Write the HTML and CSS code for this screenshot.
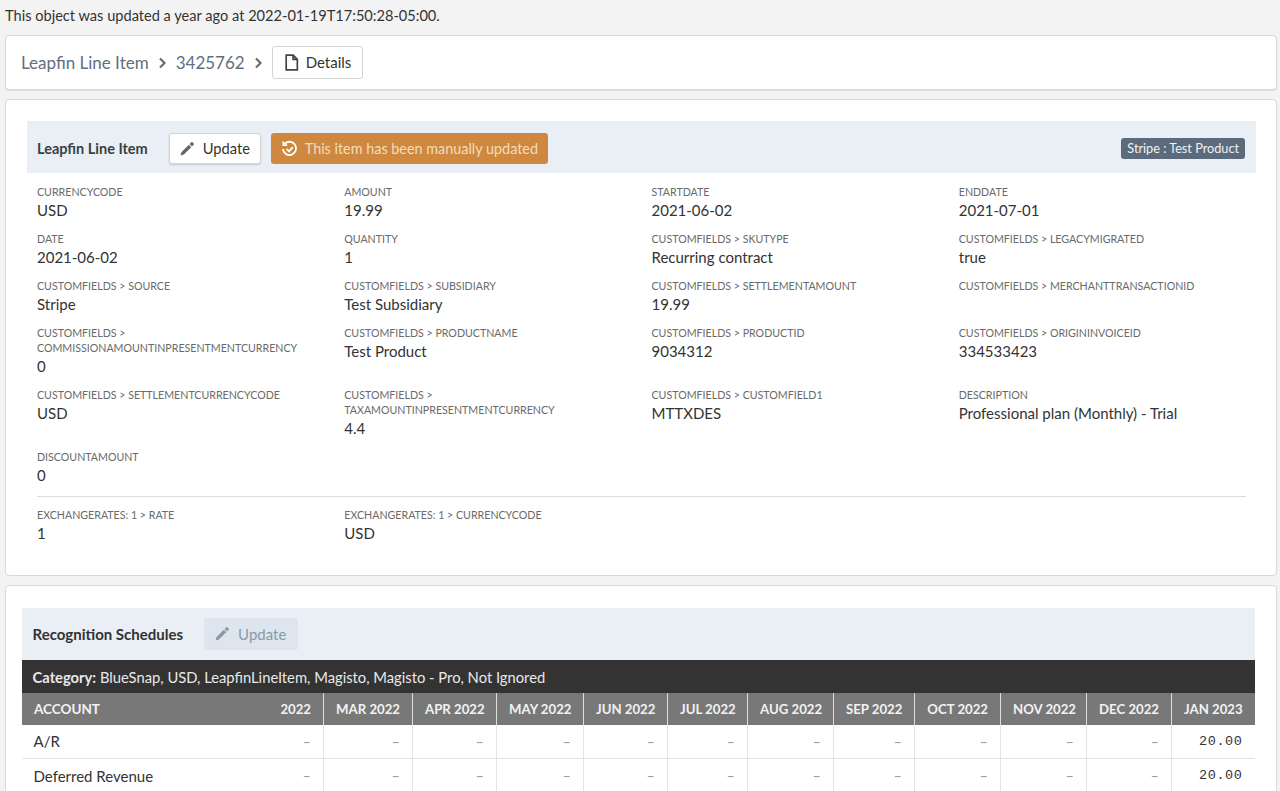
FILE: index.html
```html
<!DOCTYPE html>
<html lang="en">
<head>
<meta charset="utf-8">
<title>Leapfin Line Item</title>
<link rel="stylesheet" href="styles.css">
</head>
<body>
<p class="notice">This object was updated a year ago at 2022-01-19T17:50:28-05:00.</p>
<nav class="panel crumbs">
  <span class="crumb">Leapfin Line Item</span>
  <svg class="chev" viewBox="0 0 10 12"><path d="M3 1.500 7.500 6 3 10.500" /></svg>
  <span class="crumb">3425762</span>
  <svg class="chev" viewBox="0 0 10 12"><path d="M3 1.500 7.500 6 3 10.500" /></svg>
  <button class="btn details">
    <svg class="doc" viewBox="0 0 14 16"><path d="M2 1h6.500L12.500 5v10H2zM8.500 1v4h4"/></svg>Details
  </button>
</nav>
<section class="panel item">
  <header class="head">
    <h2>Leapfin Line Item</h2>
    <button class="btn update">
      <svg class="pencil" viewBox="0 0 16 16"><path d="M0.500 15.500l1-3.600 7.900-7.900 2.600 2.600-7.900 7.900zM10.200 3.200l1.800-1.800a1 1 0 0 1 1.400 0l1.200 1.200a1 1 0 0 1 0 1.400l-1.800 1.800z"/></svg>Update
    </button>
    <span class="flag">
      <svg class="hist" viewBox="0 0 18 18"><path d="M3.500 4.500A7 7 0 1 1 2 9.500"/><path d="M2.500 1.500v4h4"/><path d="M6 9.500l2.500 2.500 4-4.500"/></svg>This item has been manually updated
    </span>
    <span class="tag">Stripe : Test Product</span>
  </header>
  <div class="fields">
    <div class="f"><label>CURRENCYCODE</label><b>USD</b></div>
    <div class="f"><label>AMOUNT</label><b>19.99</b></div>
    <div class="f"><label>STARTDATE</label><b>2021-06-02</b></div>
    <div class="f"><label>ENDDATE</label><b>2021-07-01</b></div>
    <div class="f"><label>DATE</label><b>2021-06-02</b></div>
    <div class="f"><label>QUANTITY</label><b>1</b></div>
    <div class="f"><label>CUSTOMFIELDS &gt; SKUTYPE</label><b>Recurring contract</b></div>
    <div class="f"><label>CUSTOMFIELDS &gt; LEGACYMIGRATED</label><b>true</b></div>
    <div class="f"><label>CUSTOMFIELDS &gt; SOURCE</label><b>Stripe</b></div>
    <div class="f"><label>CUSTOMFIELDS &gt; SUBSIDIARY</label><b>Test Subsidiary</b></div>
    <div class="f"><label>CUSTOMFIELDS &gt; SETTLEMENTAMOUNT</label><b>19.99</b></div>
    <div class="f"><label>CUSTOMFIELDS &gt; MERCHANTTRANSACTIONID</label></div>
    <div class="f"><label>CUSTOMFIELDS &gt; COMMISSIONAMOUNTINPRESENTMENTCURRENCY</label><b>0</b></div>
    <div class="f"><label>CUSTOMFIELDS &gt; PRODUCTNAME</label><b>Test Product</b></div>
    <div class="f"><label>CUSTOMFIELDS &gt; PRODUCTID</label><b>9034312</b></div>
    <div class="f"><label>CUSTOMFIELDS &gt; ORIGININVOICEID</label><b>334533423</b></div>
    <div class="f"><label>CUSTOMFIELDS &gt; SETTLEMENTCURRENCYCODE</label><b>USD</b></div>
    <div class="f"><label>CUSTOMFIELDS &gt; TAXAMOUNTINPRESENTMENTCURRENCY</label><b>4.4</b></div>
    <div class="f"><label>CUSTOMFIELDS &gt; CUSTOMFIELD1</label><b>MTTXDES</b></div>
    <div class="f"><label>DESCRIPTION</label><b>Professional plan (Monthly) - Trial</b></div>
    <div class="f"><label>DISCOUNTAMOUNT</label><b>0</b></div>
  </div>
  <hr class="rule">
  <div class="fields">
    <div class="f"><label>EXCHANGERATES: 1 &gt; RATE</label><b>1</b></div>
    <div class="f"><label>EXCHANGERATES: 1 &gt; CURRENCYCODE</label><b>USD</b></div>
  </div>
</section>
<section class="panel sched">
  <header class="head shead">
    <h2>Recognition Schedules</h2>
    <button class="btn off">
      <svg class="pencil" viewBox="0 0 16 16"><path d="M0.500 15.500l1-3.600 7.900-7.900 2.600 2.600-7.900 7.900zM10.200 3.200l1.800-1.800a1 1 0 0 1 1.400 0l1.200 1.200a1 1 0 0 1 0 1.400l-1.800 1.800z"/></svg>Update
    </button>
  </header>
  <div class="cat"><strong>Category:</strong> BlueSnap, USD, LeapfinLineItem, Magisto, Magisto - Pro, Not Ignored</div>
  <table>
    <colgroup><col><col><col><col><col><col><col><col><col><col><col><col><col></colgroup>
    <thead>
      <tr><th>ACCOUNT</th><th>2022</th><th>MAR 2022</th><th>APR 2022</th><th>MAY 2022</th><th>JUN 2022</th><th>JUL 2022</th><th>AUG 2022</th><th>SEP 2022</th><th>OCT 2022</th><th>NOV 2022</th><th>DEC 2022</th><th>JAN 2023</th></tr>
    </thead>
    <tbody>
      <tr><td>A/R</td><td>–</td><td>–</td><td>–</td><td>–</td><td>–</td><td>–</td><td>–</td><td>–</td><td>–</td><td>–</td><td>–</td><td class="n">20.00</td></tr>
      <tr><td>Deferred Revenue</td><td>–</td><td>–</td><td>–</td><td>–</td><td>–</td><td>–</td><td>–</td><td>–</td><td>–</td><td>–</td><td>–</td><td class="n">20.00</td></tr>
    </tbody>
  </table>
</section>
</body>
</html>
```
FILE: styles.css
```css
*{box-sizing:border-box}
html,body{height:791px;overflow:hidden}
body{margin:0;padding:0 3px 0 5px;background:#f3f3f3;font-family:Lato,sans-serif;color:#2f3a45;font-size:15px}
.notice{margin:0;height:35px;padding:7px 0 0;font-size:14.6px;line-height:18px;color:#333}
.panel{background:#fff;border:1px solid #d8d8d8;border-radius:4px}
.crumbs{height:55px;display:flex;align-items:center;padding:0 15px;box-shadow:0 1px 1px rgba(0,0,0,.1)}
.crumb{font-size:17px;color:#5f6f7e}
.chev{width:10px;height:12px;margin:0 8.500px;fill:none;stroke:#5f6f7e;stroke-width:2.200}
.btn{display:inline-flex;align-items:center;font-family:inherit;background:#fff;border:1px solid #d4d4d4;border-radius:3px;color:#333;font-size:15px;padding:0}
.details{height:33px;width:91px;padding:0 0 1px 11px;font-size:15px}
.doc{width:15px;height:17px;margin-right:7px;fill:none;stroke:#444;stroke-width:1.600}
.item{margin-top:9px;height:477px;padding:21px 20px 0 20.500px}
.head{display:flex;align-items:center;height:52px;background:#e9eff4;padding:2px 11px 0 10.500px}
.head h2{margin:0;font-size:14.500px;font-weight:700;color:#3a3f45}
.update{height:31px;width:92px;margin-left:21px;padding-left:10px;font-size:14.700px;box-shadow:0 1px 2px rgba(0,0,0,.15)}
.pencil{width:15px;height:15px;margin-right:8px;fill:#666}
.flag{display:inline-flex;align-items:center;height:31px;width:277px;margin-left:10px;padding-left:10px;background:#cf883f;color:#f3dcbc;border-radius:3px;font-size:14.400px}
.hist{width:17px;height:17px;margin-right:7px;fill:none;stroke:#fff;stroke-width:1.900}
.tag{margin-left:auto;height:21px;padding:0 6px;line-height:21px;background:#5b6b7c;color:#f0f2f4;font-size:12.700px;border-radius:3px}
.fields{display:grid;grid-template-columns:repeat(4,307.250px);padding:0 10.500px;margin-top:11px;row-gap:9px}
.rule+.fields{margin-top:10px}
.f{padding-right:30px;min-height:38px}
.f label{display:block;font-size:10.650px;line-height:15px;color:#6a6a6a}
.f b{display:block;font-weight:400;font-size:15px;line-height:23px;color:#333}
.rule{border:0;border-top:1px solid #ddd;margin:9px 10.500px 0;height:0}
.sched{margin-top:9px;height:260px;padding:21.500px 21px 0 16px}
.shead{height:52.500px;padding:0 10.500px}
.shead h2{font-size:15px;color:#333}
.off{height:32px;width:94px;margin-left:21px;padding-left:11px;background:#dde6ee;border:0;color:#8a99a6}
.off .pencil{fill:#8a99a6}
.cat{background:#333;color:#e8e8e8;height:32.500px;line-height:34px;padding:0 10.500px;font-size:14.750px}
.cat strong{font-weight:700}
table{border-collapse:collapse;width:1232.500px;table-layout:fixed}
col:nth-child(1){width:220px}
col:nth-child(2){width:81.500px}
col:nth-child(3){width:89px}
col:nth-child(4){width:84px}
col:nth-child(5){width:87px}
col:nth-child(6){width:84px}
col:nth-child(7){width:80px}
col:nth-child(8){width:86px}
col:nth-child(9){width:81px}
col:nth-child(10){width:86px}
col:nth-child(11){width:86px}
col:nth-child(12){width:85px}
col:nth-child(13){width:83px}
th{background:#787878;color:#f2f2f2;font-weight:700;height:32px;font-size:13.200px;text-align:right;padding:0 12px;border-left:1px solid #ddd;white-space:nowrap}
th:first-child{text-align:left;border-left:0;font-size:13.500px}
th:nth-child(2){border-left:0}
td{height:34px;text-align:right;padding:0 12px;border:1px solid #e4e4e4;border-top:0;color:#a0a0a0;font-size:14.500px}
td:first-child{text-align:left;color:#333;font-size:15px;border-right:0;border-left:0;padding-left:11.500px}
td:nth-child(2){border-left:0}
td:last-child{border-right:0}
.n{font-family:"Liberation Mono",monospace;color:#333;font-size:13.500px;letter-spacing:.6px}
```
